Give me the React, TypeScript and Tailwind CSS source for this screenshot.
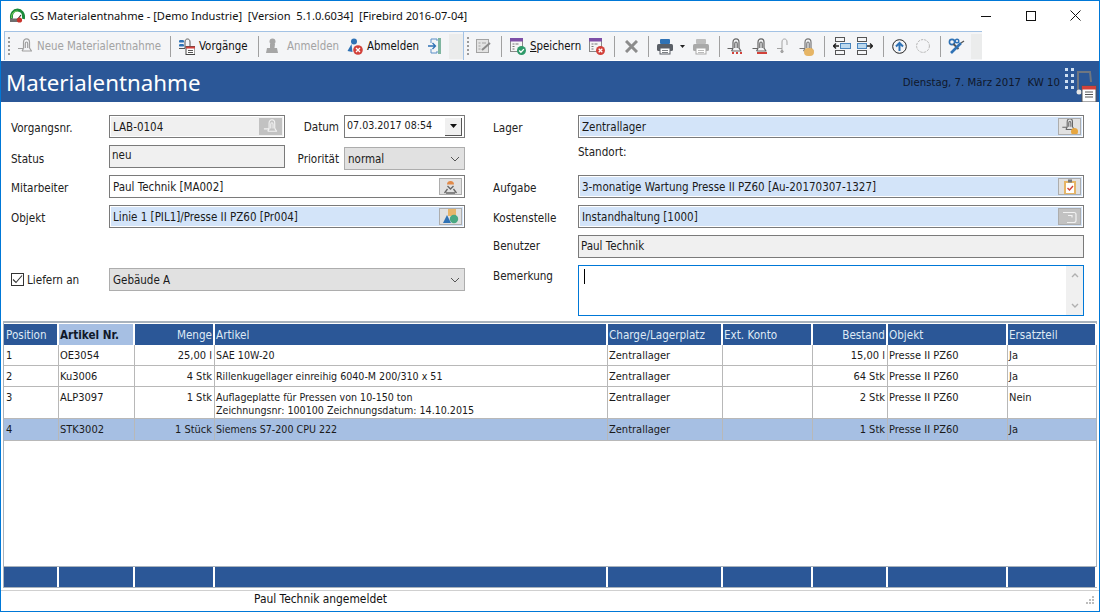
import React from "react";

const tahoma = "font-['DejaVu_Sans_Condensed','DejaVu_Sans',sans-serif]";

function Lift({ c = "#8a8a8a", w = 15, h = 17, className = "" }: { c?: string; w?: number; h?: number; className?: string }) {
  return (
    <svg width={w} height={h} viewBox="0 0 15 17" fill="none" stroke={c} strokeWidth="1.2" className={className}>
      <path d="M0.5 10.5h5.5M6 10.5V4.2C6 2 7.5 0.8 9 0.8s3 1.2 3 3.4v6" />
      <path d="M7.8 10V5.8c0-1 .5-1.8 1.2-1.8s1.2.8 1.2 1.8V10" />
      <path d="M4.5 13h10M6 10.5l-1.5 2.5M12 10l2 3" />
    </svg>
  );
}

function Grip() {
  return (
    <svg width="2" height="18" viewBox="0 0 2 18" className="shrink-0" fill="#9a9a9a">
      <rect y="0" width="2" height="2" />
      <rect y="4" width="2" height="2" />
      <rect y="8" width="2" height="2" />
      <rect y="12" width="2" height="2" />
      <rect y="16" width="2" height="2" />
    </svg>
  );
}

function Badge({ ok }: { ok: boolean }) {
  return ok ? (
    <g>
      <circle cx="11.5" cy="11.5" r="4.5" fill="#2e9a6a" />
      <path d="M9.2 11.5l1.7 1.8 3-3.2" stroke="#fff" strokeWidth="1.3" fill="none" />
    </g>
  ) : (
    <g>
      <circle cx="11.5" cy="11.5" r="4.5" fill="#d2413a" />
      <path d="M9.7 9.7l3.6 3.6M13.3 9.7l-3.6 3.6" stroke="#fff" strokeWidth="1.3" />
    </g>
  );
}

function SaveIcon({ ok }: { ok: boolean }) {
  return (
    <svg width="16" height="17" viewBox="0 0 16 17" className="shrink-0">
      <rect x="0.5" y="0.5" width="12" height="13" fill="#f5f5f5" stroke="#888" />
      <rect x="0" y="0" width="13" height="3.5" fill="#7d4fa6" />
      <path d="M2.5 6h2M2.5 8.5h2M2.5 11h2M5.5 6h3" stroke="#777" />
      <g transform="translate(0 1)">
        <Badge ok={ok} />
      </g>
    </svg>
  );
}

function Printer({ gray = false }: { gray?: boolean }) {
  const a = gray ? "#a9a9a9" : "#5a5f66";
  const b = gray ? "#bdbdbd" : "#2f72b5";
  return (
    <svg width="16" height="17" viewBox="0 0 16 17" className="shrink-0">
      <rect x="3" y="1" width="10" height="5" fill={b} rx="1" />
      <rect x="0" y="6" width="16" height="7" fill={a} rx="1.5" />
      <rect x="3" y="10" width="10" height="6" fill="#fff" stroke={a} />
      <path d="M5 12.5h6M5 14.5h6" stroke={a} strokeWidth="0.8" />
    </svg>
  );
}

function Chevron() {
  return (
    <svg width="10" height="6" viewBox="0 0 10 6" fill="none" stroke="#555" className="shrink-0">
      <path d="M1 1l4 4 4-4" />
    </svg>
  );
}

function Field({
  text,
  bg = "white",
  icon,
  className = "",
}: {
  text: string;
  bg?: "white" | "gray" | "blue";
  icon?: React.ReactNode;
  className?: string;
}) {
  const inner = bg === "blue" ? "bg-[#d3e4f9]" : bg === "gray" ? "bg-[#f0f0f0]" : "bg-white";
  return (
    <div className={`h-[23px] border border-[#7a7a7a] bg-white p-px ${className}`}>
      <div className={`flex h-full items-center justify-between pl-[2px] pr-[1px] text-[11.5px] text-[#1a1a1a] ${inner}`}>
        <span className="whitespace-pre pt-[2px]">{text}</span>
        {icon}
      </div>
    </div>
  );
}

function FieldButton({ children, bg = "bg-[#e1e1e1]" }: { children: React.ReactNode; bg?: string }) {
  return (
    <div className={`flex h-[17px] w-[23px] items-center justify-center overflow-hidden border border-[#adadad] ${bg}`}>
      {children}
    </div>
  );
}

function Combo({ text, className = "" }: { text: string; className?: string }) {
  return (
    <div className={`flex h-[23px] items-center justify-between border border-[#adadad] bg-[#e1e1e1] pl-[3px] pr-[4px] text-[11.5px] text-[#1a1a1a] ${className}`}>
      <span className="pt-[2px]">{text}</span>
      <Chevron />
    </div>
  );
}

function Label({ children, className = "" }: { children: React.ReactNode; className?: string }) {
  return <div className={`text-[11.6px] text-[#222] ${className}`}>{children}</div>;
}

const cols = "grid grid-cols-[55px_76px_80px_393px_115px_90px_75px_120px_89px]";

const rows = [
  { p: "1", n: "OE3054", m: "25,00 l", a: ["SAE 10W-20"], b: "15,00 l", e: "Ja", h: "h-[21px]" },
  { p: "2", n: "Ku3006", m: "4 Stk", a: ["Rillenkugellager einreihig 6040-M 200/310 x 51"], b: "64 Stk", e: "Ja", h: "h-[21px]" },
  { p: "3", n: "ALP3097", m: "1 Stk", a: ["Auflageplatte für Pressen von 10-150 ton", "Zeichnungsnr: 100100 Zeichnungsdatum: 14.10.2015"], b: "2 Stk", e: "Nein", h: "h-[32px]" },
  { p: "4", n: "STK3002", m: "1 Stück", a: ["Siemens S7-200 CPU 222"], b: "1 Stk", e: "Ja", h: "h-[22px]", sel: true },
];

const heads: [string, string][] = [
  ["Position", ""],
  ["Artikel Nr.", "sel"],
  ["Menge", "r"],
  ["Artikel", ""],
  ["Charge/Lagerplatz", ""],
  ["Ext. Konto", ""],
  ["Bestand", "r"],
  ["Objekt", ""],
  ["Ersatzteil", ""],
];

function Sep({ className }: { className: string }) {
  return <div className={`h-[21px] w-px shrink-0 bg-[#a0a0a0] ${className}`} />;
}

export default function App() {
  const gridLine = "border-r border-[#b8b8b8]";
  return (
    <div className={`flex h-[612px] w-[1100px] flex-col overflow-hidden border border-[#0078d7] bg-white ${tahoma}`}>
      {/* title bar */}
      <div className="flex h-[30px] shrink-0 items-center justify-between">
        <div className="flex items-center">
          <svg width="17" height="16" viewBox="0 0 17 16" className="ml-[8px]" fill="none">
            <path d="M2.5 11C1.5 5 5 2 8.5 2s7 3 6 9" stroke="#1a8a3a" strokeWidth="2.8" />
            <path d="M2.5 10C2 6 5 3 8.5 3" stroke="#7ed05a" strokeWidth="1" />
            <rect x="1" y="10.5" width="9" height="3.5" fill="#6f6f6f" />
            <path d="M8 12l4-5" stroke="#333" strokeWidth="1.2" />
            <circle cx="10.5" cy="12" r="2.6" fill="#c8322b" />
          </svg>
          <span className="ml-[4px] whitespace-pre font-['Noto_Sans',sans-serif] text-[11.1px] text-[#111]">
            GS Materialentnahme - [Demo Industrie]  [Version  5.1.0.6034]  [Firebird 2016-07-04]
          </span>
        </div>
        <div className="-mt-px mr-px flex items-center">
          <div className="flex h-[30px] w-[45px] items-center justify-center">
            <svg width="10" height="10" viewBox="0 0 10 10" stroke="#111"><path d="M0 5.5h10" /></svg>
          </div>
          <div className="flex h-[30px] w-[45px] items-center justify-center">
            <svg width="10" height="10" viewBox="0 0 10 10" stroke="#111" fill="none"><rect x="0.5" y="0.5" width="9" height="9" /></svg>
          </div>
          <div className="flex h-[30px] w-[45px] items-center justify-center">
            <svg width="11" height="11" viewBox="0 0 11 11" stroke="#111" fill="none"><path d="M0.5 0.5l10 10M10.5 0.5l-10 10" /></svg>
          </div>
        </div>
      </div>

      {/* toolbars */}
      <div className="flex h-[30px] shrink-0 pl-[3px] text-[11.4px] text-[#1a1a1a]">
        <div className="flex h-[29px] w-[459px] shrink-0 items-center border-l border-t border-[#a3c2e4] bg-[#f4f5f7]">
          <div className="ml-[3px]"><Grip /></div>
          <Lift c="#a0a0a0" w={16} className="ml-[7px] shrink-0" />
          <span className="ml-[4px] w-[124px] shrink-0 whitespace-pre pt-[2px] text-[#a3a3a3]">Neue Materialentnahme</span>
          <Sep className="ml-[9px]" />
          <svg width="16" height="17" viewBox="0 0 16 17" className="ml-[8px] shrink-0">
            <rect x="0" y="2" width="5" height="2.6" rx="1.2" fill="#2f72b5" />
            <rect x="0" y="6" width="5" height="2.6" rx="1.2" fill="#2f72b5" />
            <path d="M0 10.5h6M6 10V4c0-2 1-3 2.5-3S11 2 11 4v4" stroke="#555" fill="none" />
            <rect x="7" y="8.5" width="9" height="8" fill="#fff" stroke="#444" />
            <rect x="7" y="8.5" width="9" height="2" fill="#d2413a" />
            <path d="M9 12.5h5M9 14.5h5" stroke="#555" />
          </svg>
          <span className="ml-[4px] w-[50px] shrink-0 whitespace-pre pt-[2px] font-medium text-[#111]">Vorgänge</span>
          <Sep className="ml-[9px]" />
          <svg width="12" height="16" viewBox="0 0 12 16" className="ml-[7px] shrink-0" fill="#a6a6a6">
            <circle cx="6.5" cy="3.5" r="3" />
            <path d="M4 6h5l-.5 4H11l1 5H0l1-5h3z" />
          </svg>
          <span className="ml-[9px] w-[52px] shrink-0 whitespace-pre pt-[2px] text-[#a3a3a3]">Anmelden</span>
          <svg width="16" height="17" viewBox="0 0 16 17" className="ml-[8px] shrink-0">
            <circle cx="7" cy="3.5" r="3" fill="#2f72b5" />
            <path d="M4.5 6l-4 7 5 1z" fill="#2f72b5" />
            <circle cx="11" cy="12" r="4.8" fill="#d2413a" />
            <path d="M9 10l4 4M13 10l-4 4" stroke="#fff" strokeWidth="1.3" />
          </svg>
          <span className="ml-[4px] w-[52px] shrink-0 whitespace-pre pt-[2px] text-[#111]">Abmelden</span>
          <svg width="14" height="16" viewBox="0 0 14 16" className="ml-[9px] shrink-0" fill="none">
            <path d="M9 3V1H3v4M3 11v4h6v-2" stroke="#5b8fc7" />
            <rect x="10" y="0" width="3" height="16" fill="#7fb5a0" />
            <path d="M0 8h7M4.5 5l3 3-3 3" stroke="#2f72b5" strokeWidth="1.3" />
          </svg>
          <div className="ml-[7px] h-[25px] w-[14px] shrink-0 bg-[#ebecec]" />
        </div>
        <div className="flex h-[29px] w-[519px] shrink-0 items-center border-l border-t border-[#a3c2e4] bg-[#f4f5f7]">
          <div className="ml-[3px]"><Grip /></div>
          <svg width="15" height="16" viewBox="0 0 15 16" className="ml-[7px] shrink-0" fill="none">
            <rect x="0.5" y="1.5" width="12" height="13" fill="#e3e3e3" stroke="#a3a3a3" />
            <path d="M2.5 5h2M2.5 8h2M2.5 11h2M6 5h4" stroke="#a3a3a3" />
            <path d="M6 12l8-7" stroke="#8a8a8a" strokeWidth="2" />
          </svg>
          <Sep className="ml-[10px]" />
          <div className="ml-[8px]"><SaveIcon ok /></div>
          <span className="ml-[4px] w-[51px] shrink-0 whitespace-pre pt-[2px] text-[#111]"><u>S</u>peichern</span>
          <div className="ml-[8px]"><SaveIcon ok={false} /></div>
          <Sep className="ml-[9px]" />
          <svg width="13" height="13" viewBox="0 0 13 13" className="ml-[10px] shrink-0" stroke="#8c8c8c" strokeWidth="3">
            <path d="M1 1l11 11M12 1L1 12" />
          </svg>
          <Sep className="ml-[10px]" />
          <div className="ml-[8px]"><Printer /></div>
          <svg width="5" height="3" viewBox="0 0 5 3" className="ml-[7px] shrink-0" fill="#222"><path d="M0 0h5L2.5 3z" /></svg>
          <div className="ml-[8px]"><Printer gray /></div>
          <Sep className="ml-[10px]" />
          <div className="relative ml-[7px] shrink-0">
            <Lift c="#666" />
            <div className="absolute bottom-[1px] right-0 h-[2px] w-[10px] border-b-2 border-dotted border-[#d2413a]" />
          </div>
          <div className="relative ml-[10px] shrink-0">
            <Lift c="#666" />
            <div className="absolute bottom-[1px] right-0 h-[2px] w-[10px] bg-[#d2413a]" />
          </div>
          <svg width="11" height="17" viewBox="0 0 11 17" className="ml-[10px] shrink-0" fill="none" stroke="#a3a3a3">
            <path d="M0 10.5h5V4c0-2 1-3 2.5-3S10 2 10 4v3M5 10.5v3" />
            <circle cx="5" cy="13.5" r="1.2" fill="#a3a3a3" />
          </svg>
          <div className="relative ml-[11px] shrink-0">
            <Lift c="#777" />
            <div className="absolute -bottom-[1px] right-0 h-[8px] w-[10px] rounded-full bg-[#e6b566]" />
          </div>
          <Sep className="ml-[10px]" />
          <svg width="18" height="18" viewBox="0 0 18 18" className="ml-[8px] shrink-0" fill="none" stroke="#555">
            <rect x="2.5" y="0.5" width="9" height="4" />
            <rect x="7.5" y="6.5" width="10" height="5" fill="#bcd9ef" stroke="#4a86bf" />
            <rect x="2.5" y="13.5" width="9" height="4" />
            <path d="M0 9h6M3 6.5L0.5 9 3 11.5" stroke="#222" strokeWidth="1.4" />
          </svg>
          <svg width="16" height="18" viewBox="0 0 16 18" className="ml-[6px] shrink-0" fill="none" stroke="#555">
            <rect x="0.5" y="0.5" width="9" height="4" />
            <rect x="0.5" y="6.5" width="9" height="5" fill="#bcd9ef" stroke="#4a86bf" />
            <rect x="0.5" y="13.5" width="9" height="4" />
            <path d="M10 9h5.5M13 6.5L15.5 9 13 11.5" stroke="#222" strokeWidth="1.4" />
          </svg>
          <Sep className="ml-[10px]" />
          <svg width="15" height="15" viewBox="0 0 15 15" className="ml-[8px] shrink-0" fill="none">
            <circle cx="7.5" cy="7.5" r="6.8" stroke="#222" />
            <path d="M7.5 12V4M4 7.5l3.5-3.5L11 7.5" stroke="#2f72b5" strokeWidth="2" />
          </svg>
          <svg width="14" height="14" viewBox="0 0 14 14" className="ml-[9px] shrink-0" fill="none">
            <circle cx="7" cy="7" r="6.4" stroke="#b5b5b5" strokeDasharray="2.4 1" />
          </svg>
          <Sep className="ml-[10px]" />
          <svg width="17" height="17" viewBox="0 0 17 17" className="ml-[7px] shrink-0" fill="none">
            <circle cx="4" cy="4" r="2.6" stroke="#2f72b5" strokeWidth="1.6" />
            <circle cx="9" cy="3" r="1.8" stroke="#2f72b5" strokeWidth="1.4" />
            <path d="M5.5 6l5 5" stroke="#555" strokeWidth="2" />
            <path d="M3 15l10-10" stroke="#2f72b5" strokeWidth="2.6" />
            <path d="M13 5l3-2" stroke="#555" strokeWidth="1.4" />
          </svg>
          <div className="ml-[6px] h-[25px] w-[11px] shrink-0 bg-[#ebecec]" />
        </div>
      </div>

      {/* blue header */}
      <div className="flex h-[41px] shrink-0 items-center justify-between bg-[#2b5797] pl-[5px]">
        <span className="pt-[4px] font-['Noto_Sans',sans-serif] text-[22.3px] leading-none text-white">Materialentnahme</span>
        <div className="flex items-center">
          <span className="whitespace-pre pt-[3px] text-[11.3px] text-[#10182a]">Dienstag, 7. März 2017  KW 10</span>
          <svg width="37" height="40" viewBox="0 0 37 40" className="ml-[2px]" fill="none">
            <g fill="#cfe0f2">
              <rect x="3" y="6" width="3" height="3" /><rect x="9" y="6" width="3" height="3" />
              <rect x="3" y="12" width="3" height="3" /><rect x="9" y="12" width="3" height="3" />
              <rect x="3" y="18" width="3" height="3" /><rect x="9" y="18" width="3" height="3" />
              <rect x="3" y="24" width="3" height="3" /><rect x="9" y="24" width="3" height="3" />
            </g>
            <path d="M16 28V10h12l1 10" stroke="#6f7680" strokeWidth="2" />
            <circle cx="17" cy="30" r="2.5" fill="#e6e6e6" />
            <rect x="20" y="24" width="14" height="16" fill="#fff" stroke="#555" />
            <rect x="20" y="24" width="14" height="3.5" fill="#d2413a" />
            <path d="M23 30h8M23 32.5h8M23 35h8" stroke="#555" />
          </svg>
        </div>
      </div>

      {/* form */}
      <div className="flex h-[219px] shrink-0">
        <div className="w-[464px] shrink-0 pl-[10px] pt-[13px]">
          <div className="flex h-[23px] items-center">
            <Label className="w-[98px] pt-[4px]">Vorgangsnr.</Label>
            <Field
              text="LAB-0104"
              bg="gray"
              className="w-[176px]"
              icon={
                <div className="flex h-[17px] w-[23px] items-center justify-center bg-[#c2c2c2]">
                  <Lift c="#f2f2f2" w={15} h={16} />
                </div>
              }
            />
            <Label className="w-[59px] pr-[5px] pt-[3px] text-right">Datum</Label>
            <div className="flex h-[23px] w-[121px] items-center justify-between border border-[#7a7a7a] bg-white pl-[2px] pr-[1px] text-[10.6px] text-[#1a1a1a]">
              <span className="-mt-[2px]">07.03.2017 08:54</span>
              <div className="mr-[1px] flex h-[18px] w-[17px] items-center justify-center border-b border-r border-[#555] bg-[#f0f0f0]">
                <svg width="7" height="4" viewBox="0 0 7 4" fill="#111"><path d="M0 0h7L3.5 4z" /></svg>
              </div>
            </div>
          </div>
          <div className="mt-[7px] flex h-[23px] items-start">
            <Label className="mt-[6px] w-[98px]">Status</Label>
            <div className="flex h-[23px] w-[176px] items-start border border-[#7a7a7a] bg-[#f0f0f0] pl-[2px] pt-[1px] text-[11.5px] text-[#1a1a1a]">neu</div>
            <Label className="mt-[6px] w-[59px] pr-[5px] text-right">Priorität</Label>
            <Combo text="normal" className="mt-[2px] w-[121px] shrink-0" />
          </div>
          <div className="mt-[7px] flex items-center">
            <Label className="w-[98px] pt-[5px]">Mitarbeiter</Label>
            <Field
              text="Paul Technik [MA002]"
              className="w-[356px]"
              icon={
                <FieldButton>
                  <svg width="15" height="14" viewBox="0 0 15 14" fill="none">
                    <path d="M4 4.5a3.5 3.5 0 0 1 7 0z" fill="#e08a4a" />
                    <path d="M4.5 6l3 3 3-3" stroke="#666" strokeWidth="1.3" />
                    <path d="M1.5 13l3-4M13.5 13l-3-4M3 13h9" stroke="#666" strokeWidth="1.3" />
                  </svg>
                </FieldButton>
              }
            />
          </div>
          <div className="mt-[7px] flex items-center">
            <Label className="w-[98px] pt-[5px]">Objekt</Label>
            <Field
              text="Linie 1 [PIL1]/Presse II PZ60 [Pr004]"
              bg="blue"
              className="w-[356px]"
              icon={
                <FieldButton>
                  <svg width="17" height="17" viewBox="0 0 17 17">
                    <rect x="6" y="0" width="8" height="8" fill="#e8b56a" />
                    <path d="M1 15l4-8 4 8z" fill="#2f72b5" />
                    <circle cx="12" cy="11" r="4.2" fill="#4aa882" />
                  </svg>
                </FieldButton>
              }
            />
          </div>
          <div className="mt-[40px] flex h-[23px] items-center">
            <div className="flex w-[98px] items-center">
              <div className="flex h-[13px] w-[13px] items-center justify-center border border-[#333] bg-white">
                <svg width="11" height="9" viewBox="0 0 11 9" fill="none" stroke="#333" strokeWidth="1.1">
                  <path d="M1 4.5l3 3 6-7" />
                </svg>
              </div>
              <Label className="ml-[3px] pt-[2px]">Liefern an</Label>
            </div>
            <Combo text="Gebäude A" className="w-[356px]" />
          </div>
        </div>

        <div className="ml-[28px] w-[591px] shrink-0 pt-[13px]">
          <div className="flex items-center">
            <Label className="w-[85px] pt-[4px]">Lager</Label>
            <Field
              text="Zentrallager"
              bg="blue"
              className="w-[506px]"
              icon={
                <FieldButton>
                  <div className="relative h-[17px] w-[17px]">
                    <Lift c="#666" w={15} h={15} />
                    <div className="absolute bottom-0 right-0 h-[7px] w-[7px] rounded-full bg-[#e6a640]" />
                  </div>
                </FieldButton>
              }
            />
          </div>
          <Label className="ml-[85px] mt-[6px] h-[31px]">Standort:</Label>
          <div className="flex items-center">
            <Label className="w-[85px] pt-[5px]">Aufgabe</Label>
            <Field
              text="3-monatige Wartung Presse II PZ60 [Au-20170307-1327]"
              bg="blue"
              className="w-[506px]"
              icon={
                <FieldButton>
                  <svg width="14" height="16" viewBox="0 0 14 16">
                    <rect x="1" y="2" width="12" height="14" fill="#e6b566" />
                    <rect x="3" y="4" width="8" height="10" fill="#fff" />
                    <rect x="5" y="0.5" width="4" height="3" fill="#777" />
                    <path d="M4.5 9l2 2 3.5-4" stroke="#d2413a" strokeWidth="1.4" fill="none" />
                  </svg>
                </FieldButton>
              }
            />
          </div>
          <div className="mt-[7px] flex items-center">
            <Label className="w-[85px] pt-[5px]">Kostenstelle</Label>
            <Field
              text="Instandhaltung [1000]"
              bg="blue"
              className="w-[506px]"
              icon={
                <FieldButton bg="bg-[#c2c2c2]">
                  <svg width="15" height="13" viewBox="0 0 15 13" fill="none" stroke="#f2f2f2">
                    <path d="M1 2.5h11a2 2 0 0 1 2 2v6a2 2 0 0 1-2 2H5M6 5.5h4v2" strokeWidth="1.2" />
                  </svg>
                </FieldButton>
              }
            />
          </div>
          <div className="mt-[7px] flex items-center">
            <Label className="w-[85px]">Benutzer</Label>
            <div className="flex h-[23px] w-[506px] items-center border border-[#7a7a7a] bg-[#f0f0f0] pl-[2px] text-[11.5px] text-[#1a1a1a]">Paul Technik</div>
          </div>
          <div className="mt-[7px] flex items-start">
            <Label className="w-[85px] pt-[3px]">Bemerkung</Label>
            <div className="flex h-[51px] w-[506px] justify-between border border-[#0078d7] bg-white pl-[5px]">
              <div className="mt-[3px] h-[15px] w-px bg-black" />
              <div className="flex w-[17px] flex-col items-center justify-between bg-[#f0f0f0] py-[7px]">
                <svg width="8" height="5" viewBox="0 0 8 5" fill="none" stroke="#b0b0b0" strokeWidth="1.4"><path d="M1 4l3-3 3 3" /></svg>
                <svg width="8" height="5" viewBox="0 0 8 5" fill="none" stroke="#b0b0b0" strokeWidth="1.4"><path d="M1 1l3 3 3-3" /></svg>
              </div>
            </div>
          </div>
        </div>
      </div>

      {/* grid */}
      <div className="mx-[2px] flex h-[267px] shrink-0 flex-col border-x border-b border-t-2 border-[#a9b3bd] pt-[1px]">
        <div className={`${cols} h-[21px] shrink-0 bg-white text-[11.6px]`}>
          {heads.map(([t, k], i) => (
            <div
              key={t}
              className={`flex items-center overflow-hidden border-r-2 border-white pt-[2px] ${i === 0 ? "pl-[2px]" : "pl-[1px]"} pr-[1px] ${
                k === "sel" ? "bg-[#a6bfe3] font-bold text-[#10182a]" : "bg-[#2b5797] text-[#dfe9f5]"
              } ${k === "r" ? "justify-end" : ""}`}
            >
              {t}
            </div>
          ))}
        </div>
        <div className="flex-1 text-[11px] leading-[13px] text-[#1a1a1a]">
          {rows.map((r) => (
            <div
              key={r.p}
              className={`${cols} ${r.h} border-b border-[#b8b8b8] ${r.sel ? "bg-[#a6bfe3]" : "bg-white"}`}
            >
              <div className={`pl-[2px] pt-[4px] ${gridLine}`}>{r.p}</div>
              <div className={`pl-[1px] pt-[4px] ${gridLine}`}>{r.n}</div>
              <div className={`pr-[2px] pt-[4px] text-right ${gridLine}`}>{r.m}</div>
              <div className={`pl-[1px] pt-[4px] text-[10.6px] ${gridLine}`}>
                {r.a.map((l) => (
                  <div key={l} className="whitespace-pre">{l}</div>
                ))}
              </div>
              <div className={`pl-[1px] pt-[4px] ${gridLine}`}>Zentrallager</div>
              <div className={gridLine} />
              <div className={`pr-[2px] pt-[4px] text-right ${gridLine}`}>{r.b}</div>
              <div className={`pl-[1px] pt-[4px] ${gridLine}`}>Presse II PZ60</div>
              <div className="pl-[1px] pt-[4px]">{r.e}</div>
            </div>
          ))}
        </div>
        <div className={`${cols} h-[21px] shrink-0 border-t border-[#a9b3bd] bg-white`}>
          {heads.map(([t]) => (
            <div key={t} className="border-r-2 border-white bg-[#2b5797]" />
          ))}
        </div>
      </div>

      {/* status bar */}
      <div className="mt-[2px] flex h-[21px] shrink-0 items-center justify-between border-t border-[#d0d0d0] bg-white pb-[2px] pl-[253px] pr-[4px] text-[11.9px] text-[#111]">
        <span>Paul Technik angemeldet</span>
        <svg width="10" height="10" viewBox="0 0 10 10" fill="#bdbdbd">
          <rect x="7" y="1" width="2" height="2" />
          <rect x="4" y="4" width="2" height="2" /><rect x="7" y="4" width="2" height="2" />
          <rect x="1" y="7" width="2" height="2" /><rect x="4" y="7" width="2" height="2" /><rect x="7" y="7" width="2" height="2" />
        </svg>
      </div>
    </div>
  );
}
